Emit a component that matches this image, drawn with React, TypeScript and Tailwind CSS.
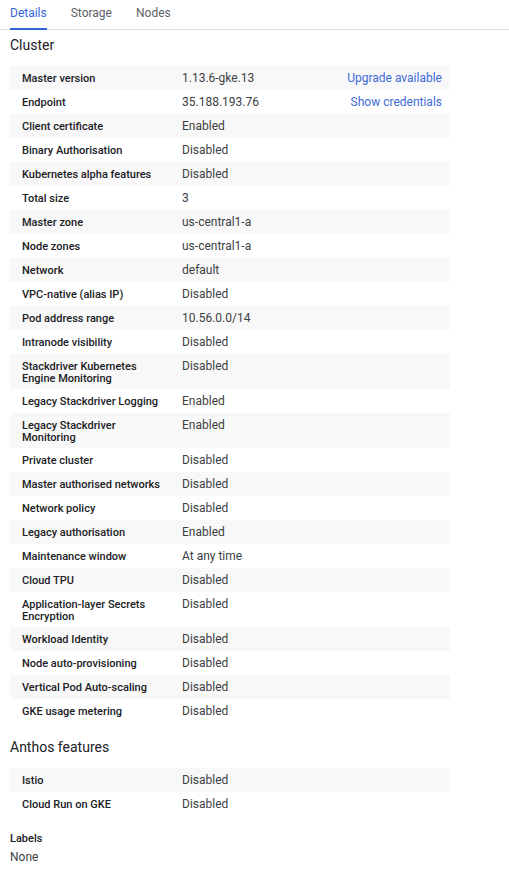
import React from "react";

type Row = { label: string; value: string; link?: string };

const cluster: Row[] = [
  { label: "Master version", value: "1.13.6-gke.13", link: "Upgrade available" },
  { label: "Endpoint", value: "35.188.193.76", link: "Show credentials" },
  { label: "Client certificate", value: "Enabled" },
  { label: "Binary Authorisation", value: "Disabled" },
  { label: "Kubernetes alpha features", value: "Disabled" },
  { label: "Total size", value: "3" },
  { label: "Master zone", value: "us-central1-a" },
  { label: "Node zones", value: "us-central1-a" },
  { label: "Network", value: "default" },
  { label: "VPC-native (alias IP)", value: "Disabled" },
  { label: "Pod address range", value: "10.56.0.0/14" },
  { label: "Intranode visibility", value: "Disabled" },
  { label: "Stackdriver Kubernetes Engine Monitoring", value: "Disabled" },
  { label: "Legacy Stackdriver Logging", value: "Enabled" },
  { label: "Legacy Stackdriver Monitoring", value: "Enabled" },
  { label: "Private cluster", value: "Disabled" },
  { label: "Master authorised networks", value: "Disabled" },
  { label: "Network policy", value: "Disabled" },
  { label: "Legacy authorisation", value: "Enabled" },
  { label: "Maintenance window", value: "At any time" },
  { label: "Cloud TPU", value: "Disabled" },
  { label: "Application-layer Secrets Encryption", value: "Disabled" },
  { label: "Workload Identity", value: "Disabled" },
  { label: "Node auto-provisioning", value: "Disabled" },
  { label: "Vertical Pod Auto-scaling", value: "Disabled" },
  { label: "GKE usage metering", value: "Disabled" },
];

const anthos: Row[] = [
  { label: "Istio", value: "Disabled" },
  { label: "Cloud Run on GKE", value: "Disabled" },
];

function Table({ rows }: { rows: Row[] }) {
  return (
    <div className="w-[440px]">
      {rows.map((r, i) => (
        <div
          key={r.label}
          className={
            "flex min-h-[24px] " + (i % 2 === 0 ? "bg-[#f8f8f8]" : "bg-white")
          }
        >
          <div className="w-[160px] shrink-0 pl-3 pr-1 pt-[7px] pb-[4px] text-[11px] leading-[12px] font-medium text-[#202124]">
            {r.label}
          </div>
          <div className="flex-1 pl-3 pt-[6px] pb-[5px] text-[12px] leading-[12px] text-[#3c4043]">
            {r.value}
          </div>
          {r.link && (
            <div className="pr-2 pt-[6px] pb-[5px] text-[12px] leading-[12px] text-[#3f6ad8]">
              {r.link}
            </div>
          )}
        </div>
      ))}
    </div>
  );
}

export default function App() {
  return (
    <div
      className="bg-white w-[509px] min-h-[885px]"
      style={{ fontFamily: "Roboto, 'Liberation Sans', sans-serif" }}
    >
      <div className="flex gap-[24px] pl-[10px] border-b border-[#dadce0] h-[30px]">
        <div className="h-[30px] -mb-px pt-[5px] text-[12px] leading-[16px] text-[#3367d6] border-b-2 border-[#3367d6]">
          Details
        </div>
        <div className="h-[30px] pt-[5px] text-[12px] leading-[16px] text-[#5f6368]">
          Storage
        </div>
        <div className="h-[30px] pt-[5px] text-[12px] leading-[16px] text-[#5f6368]">
          Nodes
        </div>
      </div>
      <div className="pl-[10px]">
        <div className="mt-[5px] mb-[11px] text-[14px] leading-[20px] text-[#202124]">
          Cluster
        </div>
        <Table rows={cluster} />
        <div className="mt-[14px] mb-[11px] text-[14px] leading-[20px] text-[#202124]">
          Anthos features
        </div>
        <Table rows={anthos} />
        <div className="mt-[15px] text-[11px] leading-[16px] font-medium text-[#202124]">
          Labels
        </div>
        <div className="mt-[2px] text-[12px] leading-[16px] text-[#3c4043]">
          None
        </div>
      </div>
    </div>
  );
}
